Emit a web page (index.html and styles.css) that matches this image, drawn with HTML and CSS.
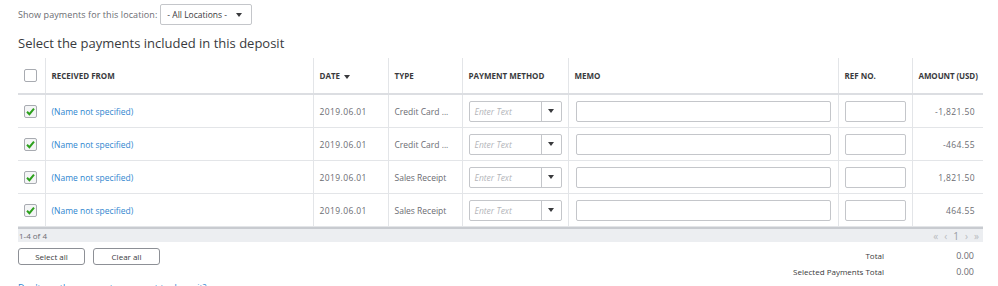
FILE: index.html
```html
<!DOCTYPE html>
<html lang="en">
<head>
    <meta charset="UTF-8">
    <title>Deposit payments</title>
    <link rel="stylesheet" href="styles.css">
</head>
<body>
    <div class="page">
        <div class="location-bar">
            <span class="location-label">Show payments for this location:</span>
            <div class="select-box">
                <span>- All Locations -</span>
                <span class="caret"></span>
            </div>
        </div>

        <h2 class="title">Select the payments included in this deposit</h2>

        <table class="payments">
            <colgroup>
                <col style="width: 27px">
                <col style="width: 268px">
                <col style="width: 75px">
                <col style="width: 74px">
                <col style="width: 106px">
                <col style="width: 270px">
                <col style="width: 74px">
                <col style="width: 71px">
            </colgroup>
            <thead>
                <tr>
                    <th class="check-col"><span class="checkbox"></span></th>
                    <th>RECEIVED FROM</th>
                    <th>DATE <span class="sort"></span></th>
                    <th>TYPE</th>
                    <th>PAYMENT METHOD</th>
                    <th>MEMO</th>
                    <th>REF NO.</th>
                    <th class="amount">AMOUNT (USD)</th>
                </tr>
            </thead>
            <tbody id="rows"></tbody>
        </table>

        <div class="table-footer">
            <span>1-4 of 4</span>
            <span class="pager">
                <span>&laquo;</span>
                <span>&lsaquo;</span>
                <b>1</b>
                <span>&rsaquo;</span>
                <span>&raquo;</span>
            </span>
        </div>

        <div class="actions">
            <div class="buttons">
                <button class="btn">Select all</button>
                <button class="btn">Clear all</button>
            </div>
            <div class="totals">
                <span>Total</span>
                <span class="value">0.00</span>
                <span>Selected Payments Total</span>
                <span class="value">0.00</span>
            </div>
        </div>

        <a class="help-link" href="#">Don't see the payments you want to deposit?</a>
    </div>

    <script>
        const payments = [
            { date: '2019.06.01', type: 'Credit Card ...', amount: '-1,821.50' },
            { date: '2019.06.01', type: 'Credit Card ...', amount: '-464.55' },
            { date: '2019.06.01', type: 'Sales Receipt', amount: '1,821.50' },
            { date: '2019.06.01', type: 'Sales Receipt', amount: '464.55' }
        ];

        const rows = document.getElementById('rows');
        const check = '<svg width="11" height="11" viewBox="0 0 11 11"><path d="M2 5.8 L4.4 8.2 L9 2.6" fill="none" stroke="#2ca01c" stroke-width="2"/></svg>';

        payments.forEach((p) => {
            const row = rows.insertRow();
            row.innerHTML = `
                <td class="check-col"><span class="checkbox checked">${check}</span></td>
                <td><a class="name" href="#">(Name not specified)</a></td>
                <td class="num">${p.date}</td>
                <td>${p.type}</td>
                <td>
                    <div class="combo">
                        <span class="combo-text">Enter Text</span>
                        <span class="combo-btn"><span class="caret"></span></span>
                    </div>
                </td>
                <td class="memo-cell"><div class="field"></div></td>
                <td><div class="field"></div></td>
                <td class="amount num">${p.amount}</td>
            `;
        });
    </script>
</body>
</html>
```

FILE: styles.css
```css
body {
    margin: 0;
    font-family: 'Open Sans', 'Liberation Sans', sans-serif;
    color: #393a3d;
    background-color: #fff;
    height: 286px;
    overflow: hidden;
}

.page {
    padding: 4px 15px 0 18px;
}

.location-bar {
    display: flex;
    align-items: center;
    height: 21px;
}

.location-label {
    font-size: 9px;
    color: #6b6c72;
    margin-right: 3px;
    letter-spacing: 0.08px;
}

.select-box {
    width: 92px;
    height: 21px;
    box-sizing: border-box;
    border: 1px solid #c4c6ca;
    border-radius: 2px;
    display: flex;
    align-items: center;
    justify-content: space-between;
    padding: 0 9px 0 6px;
    font-size: 8.5px;
    color: #393a3d;
}

.caret {
    width: 0;
    height: 0;
    border-left: 3px solid transparent;
    border-right: 3px solid transparent;
    border-top: 4px solid #393a3d;
}

.title {
    font-size: 13px;
    font-weight: 400;
    margin: 9px 0 0;
    height: 24px;
    line-height: 18px;
    color: #393a3d;
}

.payments {
    width: 965px;
    table-layout: fixed;
    border-collapse: collapse;
    font-size: 8.5px;
}

.payments th {
    height: 35px;
    padding: 0 6px;
    text-align: left;
    font-size: 8px;
    font-weight: 700;
    color: #393a3d;
    white-space: nowrap;
    border-bottom: 2px solid #dcdee2;
    border-left: 1px solid #e3e5e8;
}

.payments td {
    height: 32px;
    padding: 0 6px;
    color: #6b6c72;
    border-bottom: 1px solid #e3e5e8;
    border-left: 1px solid #e3e5e8;
    white-space: nowrap;
    overflow: hidden;
}

.payments .num {
    letter-spacing: 0.4px;
}

.payments .check-col {
    border-left: none;
    padding: 0 0 0 6px;
}

.payments .amount {
    text-align: right;
    padding-right: 8px;
}

.payments th.amount {
    padding-right: 6px;
    letter-spacing: -0.1px;
}

.sort {
    display: inline-block;
    vertical-align: middle;
    margin-left: 2px;
    border-left: 3px solid transparent;
    border-right: 3px solid transparent;
    border-top: 4px solid #393a3d;
}

.checkbox {
    display: flex;
    align-items: center;
    justify-content: center;
    width: 13px;
    height: 13px;
    box-sizing: border-box;
    border: 1px solid #a8abb1;
    border-radius: 2px;
    background-color: #fff;
}

.checkbox.checked {
    background-color: #f4f5f6;
}

.name {
    color: #2f86cf;
    text-decoration: none;
}

.combo {
    display: flex;
    height: 21px;
    box-sizing: border-box;
    border: 1px solid #c4c6ca;
    border-radius: 2px;
}

.combo-text {
    flex: 1;
    display: flex;
    align-items: center;
    padding-left: 5px;
    font-style: italic;
    color: #b3b5b9;
    font-size: 8.5px;
}

.combo-btn {
    width: 19px;
    display: flex;
    align-items: center;
    justify-content: center;
    border-left: 1px solid #c4c6ca;
}

.memo-cell {
    padding: 0 7px !important;
}

.field {
    height: 21px;
    box-sizing: border-box;
    border: 1px solid #c4c6ca;
    border-radius: 2px;
}

.table-footer {
    width: 965px;
    box-sizing: border-box;
    height: 15px;
    border-top: 2px solid #c8cbd0;
    background-color: #eceef1;
    display: flex;
    align-items: center;
    justify-content: space-between;
    padding: 0 4px 0 1px;
    font-size: 8px;
    color: #6b6c72;
}

.pager {
    display: flex;
    gap: 6px;
    font-size: 10px;
    color: #b8bbc0;
}

.pager b {
    font-weight: 400;
    color: #9a9da3;
}

.actions {
    display: flex;
    justify-content: space-between;
    width: 965px;
    margin-top: 6px;
}

.buttons {
    display: flex;
    gap: 8px;
}

.btn {
    width: 67px;
    height: 17px;
    padding: 0;
    border: 1px solid #8d9096;
    border-radius: 3px;
    background-color: #fff;
    font-family: inherit;
    font-size: 8px;
    color: #393a3d;
}

.totals {
    display: grid;
    grid-template-columns: auto 90px;
    margin-right: 9px;
    font-size: 8px;
    color: #393a3d;
}

.totals span {
    height: 16px;
    line-height: 16px;
    text-align: right;
}

.totals .value {
    font-size: 9px;
    color: #6b6c72;
}

.help-link {
    display: block;
    margin-top: 1px;
    font-size: 9px;
    color: #2f86cf;
    text-decoration: none;
}
```
